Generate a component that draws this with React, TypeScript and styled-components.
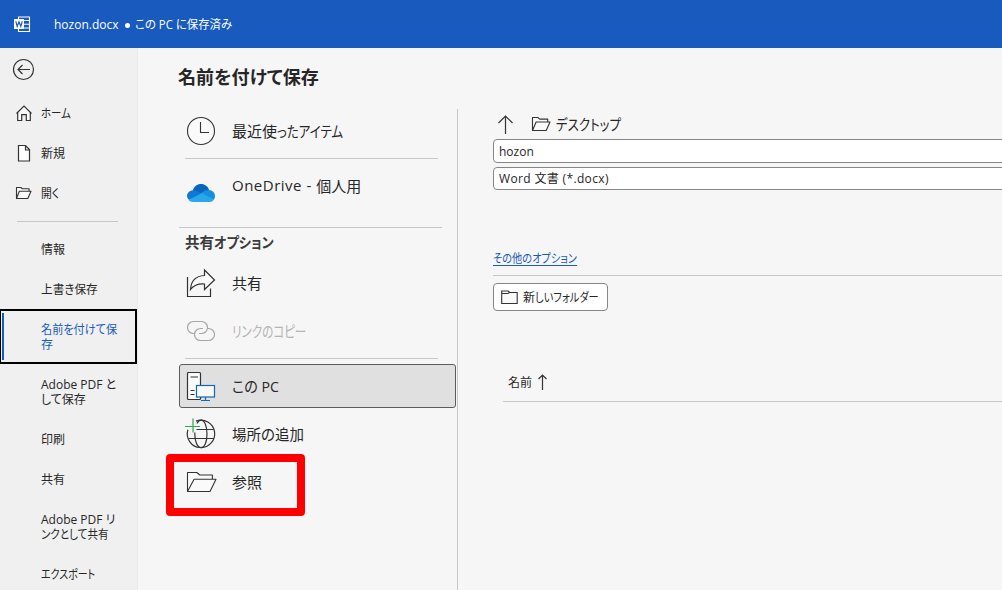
import React from "react";
import styled, { createGlobalStyle, css } from "styled-components";

const Global = createGlobalStyle`
  * { box-sizing: border-box; }
  html, body { margin: 0; overflow: hidden; background: #f6f6f6; }
  body { font-family: "Open Sans", "Noto Sans CJK JP", sans-serif; font-size: 12px; color: #262626; }
`;

const Label = styled.span<{ $size?: number; $track?: number; $scale?: number; $bold?: boolean; $shift?: number }>`
  display: inline-block;
  white-space: pre;
  font-size: ${(p) => p.$size ?? 12}px;
  font-weight: ${(p) => (p.$bold ? 700 : 400)};
  letter-spacing: ${(p) => p.$track ?? 0}px;
  font-feature-settings: "palt";
  transform: translateY(${(p) => p.$shift ?? 0}px) scaleX(${(p) => p.$scale ?? 1});
  transform-origin: 0 50%;
`;

const Window = styled.div`
  width: 1002px;
  height: 590px;
  display: flex;
  flex-direction: column;
  overflow: hidden;
`;

const TitleBar = styled.header`
  flex: 0 0 48px;
  display: flex;
  align-items: center;
  padding-left: 13px;
  background: #185abd;
  color: #fff;
`;

const DocName = styled.div`
  display: flex;
  align-items: center;
  margin-left: 23px;
`;

const Dot = styled.span`
  width: 5px;
  height: 5px;
  margin: 2px 5px 0 6px;
  border-radius: 50%;
  background: #fff;
`;

const Body = styled.div`
  flex: 1;
  min-height: 0;
  display: flex;
`;

const Sidebar = styled.nav`
  flex: 0 0 138px;
  background: #f0f0f0;
  border-right: 1px solid #ebebeb;
  overflow: hidden;
`;

const BackButton = styled.div`
  height: 45px;
  padding: 10px 0 0 12px;
`;

const NavItem = styled.div<{ $lines?: number; $active?: boolean }>`
  height: ${(p) => (p.$lines === 2 ? 55 : 40)}px;
  display: flex;
  align-items: center;
  line-height: 15px;
  ${(p) =>
    p.$active &&
    css`
      color: #185abd;
      border: 2px solid #000;
      border-left-width: 1px;
      > :first-child {
        border-left: 2px solid #185abd;
        width: 40px;
        height: 47px;
        margin-left: 1px;
        flex-basis: 39px;
      }
    `}
`;

const NavIcon = styled.span`
  flex: 0 0 41px;
  display: flex;
  padding-left: 15px;
`;

const NavText = styled.span`
  display: flex;
  flex-direction: column;
  align-items: flex-start;
`;

const NavRule = styled.div`
  height: 16px;
  padding: 8px 19px 0 17px;
  &::after { content: ""; display: block; height: 1px; background: #c6c6c6; }
`;

const Places = styled.section`
  flex: 0 0 319px;
  display: flex;
  flex-direction: column;
`;

const PageTitle = styled.h1`
  margin: 0;
  height: 61px;
  padding: 13px 0 0 40px;
  line-height: 28px;
`;

const PlaceList = styled.div`
  padding-left: 41px;
`;

const Place = styled.div<{ $selected?: boolean; $muted?: boolean; $mb?: number }>`
  height: 44px;
  width: 277px;
  margin-bottom: ${(p) => p.$mb ?? 4}px;
  display: flex;
  align-items: center;
  border: 1px solid ${(p) => (p.$selected ? "#5c5c5c" : "transparent")};
  border-radius: 3px;
  background: ${(p) => (p.$selected ? "#e0e0e0" : "transparent")};
  color: ${(p) => (p.$muted ? "#b4b4b4" : "#262626")};
`;

const PlaceIcon = styled.span<{ $drop?: number }>`
  flex: 0 0 52px;
  display: flex;
  padding: ${(p) => p.$drop ?? 0}px 0 0 6px;
`;

const Rule = styled.div<{ $left?: number; $width: number; $mb: number }>`
  height: 1px;
  width: ${(p) => p.$width}px;
  margin: 0 0 ${(p) => p.$mb}px ${(p) => p.$left ?? 0}px;
  background: #c8c8c8;
`;

const GroupTitle = styled.div`
  height: 28px;
  margin-bottom: 5px;
  padding-left: 6px;
  line-height: 29px;
  color: #3b3b3b;
`;

const BrowseWrap = styled.div`
  position: relative;
`;

const Highlight = styled.div`
  position: absolute;
  left: -13px;
  top: -6px;
  width: 139px;
  height: 62px;
  border: 8px solid #fe0000;
  border-radius: 4px;
`;

const Details = styled.section`
  flex: 1;
  min-width: 0;
  margin-top: 61px;
  padding-left: 35px;
  border-left: 1px solid #c8c8c8;
`;

const PathRow = styled.div`
  height: 30px;
  display: flex;
  align-items: center;
  padding-left: 5px;
`;

const PathFolder = styled.span`
  margin: 0 6px 0 18px;
`;

const Field = styled.div<{ $height: number; $mb: number }>`
  height: ${(p) => p.$height}px;
  margin-bottom: ${(p) => p.$mb}px;
  width: 530px;
  display: flex;
  align-items: center;
  padding-left: 5px;
  background: #fff;
  border: 1px solid #868686;
  border-radius: 4px;
`;

const MoreOptions = styled.a`
  display: block;
  height: 25px;
  line-height: 16px;
  color: #185abd;
  > span {
    height: 16px;
    line-height: 18px;
    border-bottom: 1px solid #185abd;
    vertical-align: top;
  }
`;

const FolderButton = styled.div`
  width: 115px;
  height: 28px;
  display: flex;
  align-items: center;
  padding-left: 7px;
  background: #fff;
  border: 1px solid #868686;
  border-radius: 4px;
`;

const FolderText = styled.span`
  display: flex;
  margin-left: 5px;
`;

const ListHeader = styled.div`
  height: 42px;
  margin: 49px 0 0 10px;
  display: flex;
  align-items: center;
  gap: 6px;
  padding: 2px 0 0 5px;
  border-bottom: 1px solid #c8c8c8;
`;

const Drawing = styled.svg<{ $ink?: string }>`
  display: block;
  flex: none;
  fill: none;
  stroke: ${(p) => p.$ink ?? "#333"};
  overflow: visible;
`;

const WordIcon = () => (
  <Drawing $ink="#fff" width="18" height="17" viewBox="0 0 18 17">
    <path d="M5.500 3.500V1h11v14.500h-11v-3M11 4.500h5.500M11 8.300h5.500M11 12h5.500" strokeWidth="1.100" />
    <path d="M1 3h10v10H1z" fill="#fff" stroke="none" />
    <path d="M2.800 5.300l1.400 5L6 5.800l1.800 4.500 1.400-5" stroke="#185abd" strokeWidth="1.200" />
  </Drawing>
);

const BackIcon = () => (
  <Drawing width="23" height="23" viewBox="0 0 23 23">
    <circle cx="11.500" cy="11.500" r="10" strokeWidth="1.200" />
    <path d="M18 11.500H6M10.500 7L6 11.500l4.500 4.500" strokeWidth="1.200" />
  </Drawing>
);

const HomeIcon = () => (
  <Drawing width="18" height="17" viewBox="0 0 18 17">
    <path d="M1.500 8.500L9 1l7.500 7.500M2.700 7.500v8h4v-5.800h4.600v5.800h4v-8" fill="#fff" strokeWidth="1.200" />
  </Drawing>
);

const PageIcon = () => (
  <Drawing width="18" height="17" viewBox="0 0 18 17">
    <path d="M3.500.5h7l4 4v11.500h-11zM10.500.5v4.500h4" fill="#fff" strokeWidth="1.200" />
  </Drawing>
);

const OpenFolder = ({ w, h }: { w: number; h: number }) => (
  <Drawing width={w} height={h} viewBox={`0 0 ${w} ${h}`} strokeWidth="1.100">
    <path
      d={`M1.500 ${h - 0.5}V.5H${w * 0.36}L${w * 0.46} ${h * 0.15}H${w * 0.88}V${h * 0.36}M1.500 ${h - 0.5}L${w * 0.27} ${h * 0.36}H${w}L${w * 0.8} ${h - 0.5}Z`}
      fill="#fafafa"
      strokeLinejoin="round"
    />
  </Drawing>
);

const ClockIcon = () => (
  <Drawing width="30" height="30" viewBox="0 0 30 30">
    <circle cx="15" cy="15" r="13.500" fill="#fafafa" strokeWidth="1.100" />
    <path d="M14.500 6v10.500h8.500" strokeWidth="1.100" />
  </Drawing>
);

const CloudIcon = () => (
  <Drawing $ink="none" width="30" height="20" viewBox="0 0 30 20">
    <path d="M6.500 8C8 3.500 11 1 15 1c4 0 7 2.500 8 6l-6 4z" fill="#0a66bd" />
    <path d="M6.500 7.500c4-.5 6 1 8 2.500l5 3-14 5C2.500 17 1 15 1 13c0-3 2.500-5.500 5.500-5.500z" fill="#0f78d4" />
    <path d="M15 10.500c3-3 5-3.700 8-3.500 3.500.2 6 2.800 6 6 0 1.500-.6 3-1.500 4z" fill="#1490df" />
    <path d="M2.500 16.800L16 10.300l12 6.200c-1 1.700-2.700 2.500-4.500 2.500H7c-1.800 0-3.400-.8-4.500-2.200z" fill="#28a8ea" />
  </Drawing>
);

const ShareIcon = () => (
  <Drawing width="30" height="30" viewBox="0 0 30 30" strokeWidth="1.200">
    <path d="M1.500 9v19.500h23v-8" />
    <path d="M18.500 2l10 10-10 9.500v-5.500C12 15.500 8 17 4.500 21.500 5 13 9.500 8 18.500 7.500z" fill="#fafafa" />
  </Drawing>
);

const LinkIcon = () => (
  <Drawing $ink="#a6a6a6" width="30" height="22" viewBox="0 0 30 22" strokeWidth="1.200">
    <path d="M8 13.500H7.500a6 6 0 0 1 0-12h8a6 6 0 0 1 0 12h-2.500" />
    <path d="M22 8.500h.5a6 6 0 0 1 0 12h-8a6 6 0 0 1 0-12H17" />
  </Drawing>
);

const PcIcon = () => (
  <Drawing width="30" height="30" viewBox="0 0 30 30" strokeWidth="1.200">
    <rect x="1.500" y="1.500" width="13" height="27" rx="1" fill="#fafafa" />
    <path d="M4.500 6h7.500M4.500 19.500h4M4.500 23.500h4" />
    <rect x="10.500" y="14.500" width="18" height="11.500" fill="#fafafa" stroke="#0e6ab8" />
    <path d="M19.500 26v3.500M15 29.500h9" stroke="#0e6ab8" />
  </Drawing>
);

const GlobeIcon = () => (
  <Drawing width="30" height="30" viewBox="0 0 30 30" strokeWidth="1.200">
    <path d="M10 2.100A13.700 13.700 0 1 1 1.900 10.800" />
    <path d="M10.500 10.500h17M2.500 19.500h25.500" />
    <path d="M11 4.500C12 2.500 13.500 1.200 15 1.200c3.700 0 6 6 6 13.800s-2.300 13.600-6 13.600S8.800 22.500 8.800 15v-1.500" />
    <path d="M-1 7.500h15M7-.5v14" stroke="#2ea44f" />
  </Drawing>
);

const UpArrow = ({ w, h }: { w: number; h: number }) => (
  <Drawing width={w} height={h} viewBox={`0 0 ${w} ${h}`} strokeWidth="1.200">
    <path d={`M${w / 2} ${h}V1M.5 ${w / 2 + 0.5}L${w / 2} 1L${w - 0.5} ${w / 2 + 0.5}`} />
  </Drawing>
);

const NewFolderIcon = () => (
  <Drawing width="17" height="15" viewBox="0 0 17 15" strokeWidth="1.100">
    <path d="M.7 13.500V1h6.500l1.500 1.500h7.500v11zM.7 3.500h6l2-1" fill="#fafafa" />
  </Drawing>
);

type Line = { text: string; track?: number; scale?: number };
type Nav = { icon?: React.ReactNode; lines: Line[]; active?: boolean };

const topNav: Nav[] = [
  { icon: <HomeIcon />, lines: [{ text: "ホーム", scale: 0.87 }] },
  { icon: <PageIcon />, lines: [{ text: "新規" }] },
  { icon: <OpenFolder w={16} h={12} />, lines: [{ text: "開く", scale: 0.9 }] },
];

const nav: Nav[] = [
  { lines: [{ text: "情報" }] },
  { lines: [{ text: "上書き保存", scale: 0.97 }] },
  { lines: [{ text: "名前を付けて保", scale: 0.93 }, { text: "存" }], active: true },
  { lines: [{ text: "Adobe PDF と" }, { text: "して保存" }] },
  { lines: [{ text: "印刷" }] },
  { lines: [{ text: "共有" }] },
  { lines: [{ text: "Adobe PDF リ" }, { text: "ンクとして共有", scale: 0.88 }] },
  { lines: [{ text: "エクスポート", scale: 0.83 }] },
];

const NavEntry = ({ icon, lines, active }: Nav) => (
  <NavItem $lines={lines.length} $active={active}>
    <NavIcon>{icon}</NavIcon>
    <NavText>
      {lines.map((l) => (
        <Label key={l.text} $track={l.track} $scale={l.scale}>{l.text}</Label>
      ))}
    </NavText>
  </NavItem>
);

export default function App() {
  return (
    <Window>
      <Global />
      <TitleBar>
        <WordIcon />
        <DocName>
          <Label>hozon.docx</Label>
          <Dot />
          <Label $scale={0.95}>この PC に保存済み</Label>
        </DocName>
      </TitleBar>
      <Body>
        <Sidebar>
          <BackButton><BackIcon /></BackButton>
          {topNav.map((n) => <NavEntry key={n.lines[0].text} {...n} />)}
          <NavRule />
          {nav.map((n) => <NavEntry key={n.lines[0].text} {...n} />)}
        </Sidebar>
        <Places>
          <PageTitle><Label $size={18.5} $bold $scale={0.976}>名前を付けて保存</Label></PageTitle>
          <PlaceList>
            <Place $mb={5}>
              <PlaceIcon><ClockIcon /></PlaceIcon>
              <Label $size={15} $shift={-1}>最近使</Label>
              <Label $size={15} $shift={-1} $scale={0.83}>ったアイテム</Label>
            </Place>
            <Rule $left={6} $width={253} $mb={6} />
            <Place $mb={18}>
              <PlaceIcon $drop={12}><CloudIcon /></PlaceIcon>
              <Label $size={15} $shift={-2} $track={0.5}>OneDrive - </Label>
              <Label $size={15} $shift={-2}>個人用</Label>
            </Place>
            <Rule $width={263} $mb={0} />
            <GroupTitle>
              <Label $size={14.5} $bold>共有</Label>
              <Label $size={14.5} $bold $scale={0.91}>オプション</Label>
            </GroupTitle>
            <Place>
              <PlaceIcon><ShareIcon /></PlaceIcon>
              <Label $size={15} $shift={-1}>共有</Label>
            </Place>
            <Place $muted $mb={5}>
              <PlaceIcon><LinkIcon /></PlaceIcon>
              <Label $size={15} $shift={-1} $scale={0.77}>リンクのコピー</Label>
            </Place>
            <Rule $left={6} $width={253} $mb={5} />
            <Place $selected>
              <PlaceIcon><PcIcon /></PlaceIcon>
              <Label $size={15} $shift={-1} $scale={0.94}>この PC</Label>
            </Place>
            <Place>
              <PlaceIcon><GlobeIcon /></PlaceIcon>
              <Label $size={15} $shift={-1} $scale={0.965}>場所の追加</Label>
            </Place>
            <BrowseWrap>
              <Place>
                <PlaceIcon><OpenFolder w={30} h={20} /></PlaceIcon>
                <Label $size={15} $shift={-1}>参照</Label>
              </Place>
              <Highlight />
            </BrowseWrap>
          </PlaceList>
        </Places>
        <Details>
          <PathRow>
            <UpArrow w={15} h={19} />
            <PathFolder><OpenFolder w={19} h={14} /></PathFolder>
            <Label $size={15} $shift={-1} $scale={0.83}>デスクトップ</Label>
          </PathRow>
          <Field $height={24} $mb={4}><Label>hozon</Label></Field>
          <Field $height={23} $mb={60}><Label $shift={-1} $track={0.35}>Word 文書 (*.docx)</Label></Field>
          <MoreOptions><Label $scale={0.85}>その他のオプション</Label></MoreOptions>
          <Rule $width={530} $mb={7} />
          <FolderButton>
            <NewFolderIcon />
            <FolderText>
              <Label>新</Label>
              <Label $scale={0.85}>しいフォルダー</Label>
            </FolderText>
          </FolderButton>
          <ListHeader>
            <Label>名前</Label>
            <UpArrow w={9} h={16} />
          </ListHeader>
        </Details>
      </Body>
    </Window>
  );
}
